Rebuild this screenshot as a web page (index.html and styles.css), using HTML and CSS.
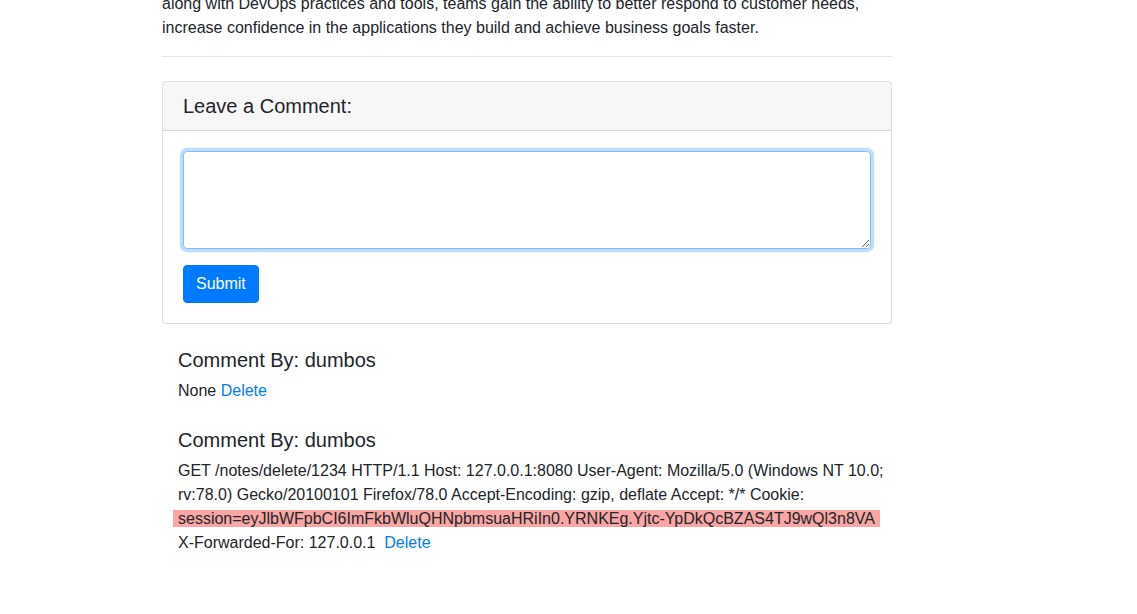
FILE: index.html
```html
<!DOCTYPE html>
<html lang="en">
<head>
<meta charset="utf-8">
<title>Post</title>
<link rel="stylesheet" href="styles.css">
</head>
<body>
<main class="main">
  <p class="intro">along with DevOps practices and tools, teams gain the ability to better respond to customer needs, increase confidence in the applications they build and achieve business goals faster.</p>
  <hr class="divider">
  <section class="card">
    <div class="card-header">
      <h5 class="card-title">Leave a Comment:</h5>
    </div>
    <div class="card-body">
      <form class="comment-form">
        <div class="form-group">
          <textarea class="form-control" rows="3" autofocus></textarea>
        </div>
        <button type="button" class="btn">Submit</button>
      </form>
    </div>
  </section>
  <section class="comments">
    <div class="comment">
      <h5 class="comment-author">Comment By: dumbos</h5>
      <p class="comment-text">None <a href="#" class="link">Delete</a></p>
    </div>
    <div class="comment">
      <h5 class="comment-author">Comment By: dumbos</h5>
      <p class="comment-text">GET /notes/delete/1234 HTTP/1.1 Host: 127.0.0.1:8080 User-Agent: Mozilla/5.0 (Windows NT 10.0; rv:78.0) Gecko/20100101 Firefox/78.0 Accept-Encoding: gzip, deflate Accept: */* Cookie: <span class="highlight">session=eyJlbWFpbCI6ImFkbWluQHNpbmsuaHRiIn0.YRNKEg.Yjtc-YpDkQcBZAS4TJ9wQl3n8VA</span> X-Forwarded-For: 127.0.0.1&nbsp; <a href="#" class="link">Delete</a></p>
    </div>
  </section>
</main>
</body>
</html>
```

FILE: styles.css
```css
* { box-sizing: border-box; }

html, body {
  margin: 0;
  padding: 0;
  background: #fff;
}

body {
  font-family: "Liberation Sans", Arial, sans-serif;
  font-size: 16px;
  line-height: 24px;
  color: #212529;
  overflow: hidden;
}

.main {
  width: 730px;
  margin-left: 162px;
  margin-top: -8px;
}

.intro {
  margin: 0 0 16px;
}

.divider {
  margin: 0 0 24px;
  border: 0;
  border-top: 1px solid rgba(0, 0, 0, 0.1);
  height: 0;
}

.card {
  border: 1px solid rgba(0, 0, 0, 0.125);
  border-radius: 4px;
  background: #fff;
}

.card-header {
  padding: 12px 20px;
  background: rgba(0, 0, 0, 0.03);
  border-bottom: 1px solid rgba(0, 0, 0, 0.125);
  border-radius: 3px 3px 0 0;
}

.card-title {
  margin: 0;
  font-size: 20px;
  font-weight: 500;
  line-height: 24px;
}

.card-body {
  padding: 20px;
}

.comment-form {
  margin: 0;
}

.form-group {
  margin-bottom: 16px;
}

.form-control {
  display: block;
  width: 100%;
  height: 98px;
  padding: 6px 12px;
  font-family: inherit;
  font-size: 16px;
  line-height: 24px;
  color: #495057;
  background: #fff;
  border: 1px solid #80bdff;
  border-radius: 4px;
  outline: 0;
  box-shadow: 0 0 0 3.2px rgba(0, 123, 255, 0.25);
  resize: vertical;
}

.btn {
  display: inline-block;
  padding: 6px 12px;
  font-family: inherit;
  font-size: 16px;
  line-height: 24px;
  color: #fff;
  background: #007bff;
  border: 1px solid #007bff;
  border-radius: 4px;
  cursor: pointer;
}

.comments {
  margin-top: 24px;
  padding-left: 16px;
}

.comment-author {
  margin: 0 0 7px;
  font-size: 20px;
  font-weight: 500;
  line-height: 24px;
}

.comment-text {
  margin: 0 0 25px;
}

.link {
  color: #007bff;
  text-decoration: none;
}

.highlight {
  background: #f9a6a4;
  padding: 0 5px;
  margin-left: -5px;
}
```
